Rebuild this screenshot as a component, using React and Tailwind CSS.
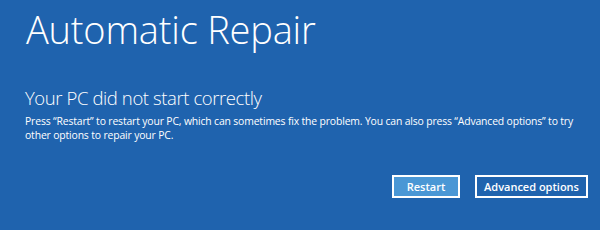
import React from "react";

const App = () => {
  return (
    <div
      className="w-[600px] h-[230px] bg-[#1f63ae] text-white flex flex-col pl-[25px] pr-[12px] overflow-hidden"
      style={{ fontFamily: '"Open Sans", "Noto Sans", sans-serif' }}
    >
      {/* Heading */}
      <h1 className="text-[38px] font-light leading-none mt-[10px] ml-[1px] tracking-[-0.2px]">
        Automatic Repair
      </h1>

      {/* Message */}
      <h2 className="text-[18.5px] font-light leading-none mt-[41px] tracking-[-0.4px]">
        Your PC did not start correctly
      </h2>
      <p className="text-[10.4px] leading-[14px] mt-[6px] w-[555px] tracking-[-0.15px]">
        Press “Restart” to restart your PC, which can sometimes fix the problem. You can also press “Advanced options” to try other options to repair your PC.
      </p>

      {/* Actions */}
      <div className="flex justify-end gap-[15px] mt-[33px]">
        <button className="h-[23px] w-[68px] border-2 border-white bg-[#4a97d5] text-[11px] font-semibold leading-none">
          Restart
        </button>
        <button className="h-[23px] w-[113px] border-2 border-white bg-[#1f63ae] text-[11px] font-semibold leading-none">
          Advanced options
        </button>
      </div>
    </div>
  );
};

export default App;
